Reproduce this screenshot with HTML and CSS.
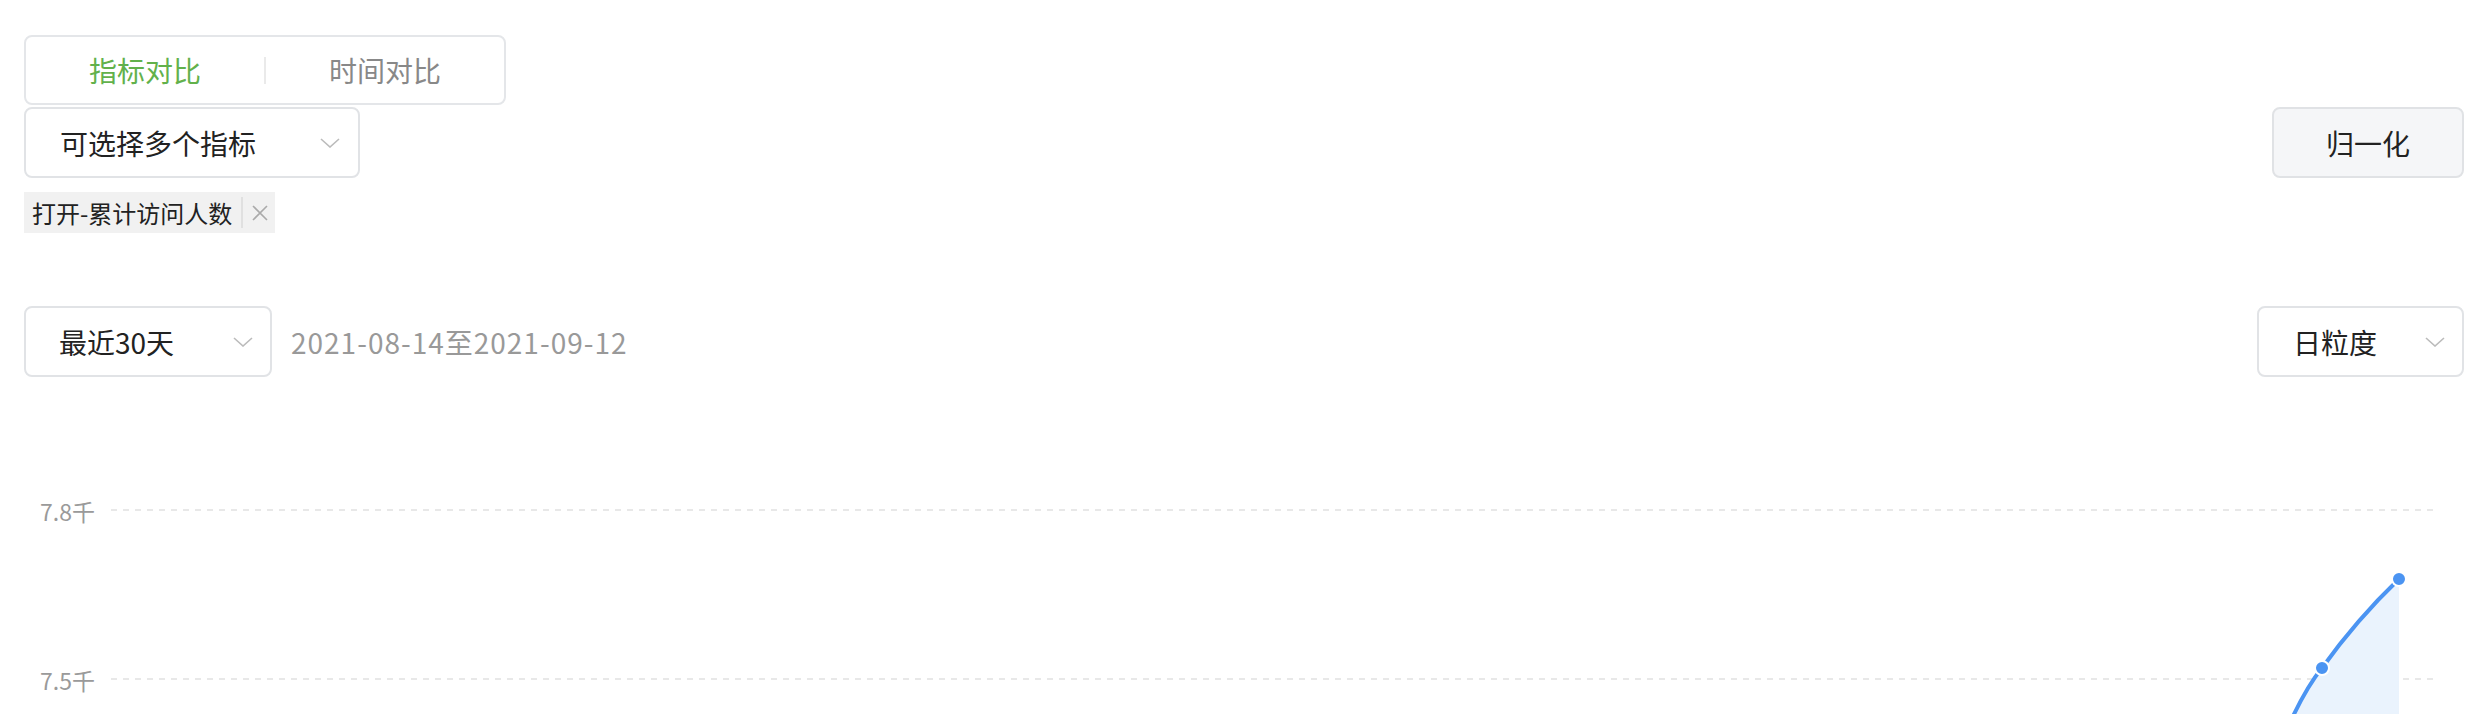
FILE: index.html
```html
<!DOCTYPE html>
<html lang="zh-CN">
<head>
  <meta charset="UTF-8">
  <title>指标对比</title>
  <link rel="stylesheet" href="styles.css">
</head>
<body>
  <div class="page">
    <div class="tabs">
      <div class="tab active">指标对比</div>
      <div class="tab-divider"></div>
      <div class="tab">时间对比</div>
    </div>

    <div class="toolbar">
      <div class="select metric-select">
        <span>可选择多个指标</span>
        <svg class="arrow" width="20" height="10" viewBox="0 0 20 10"><polyline points="1,1 10,9 19,1" fill="none" stroke="#bbb" stroke-width="1.6"/></svg>
      </div>
      <button class="btn">归一化</button>
    </div>

    <div class="tag">
      <span class="tag-text">打开-累计访问人数</span>
      <span class="tag-sep"></span>
      <svg class="tag-close" width="16" height="16" viewBox="0 0 16 16"><path d="M1 1 L15 15 M15 1 L1 15" stroke="#aaa" stroke-width="1.6"/></svg>
    </div>

    <div class="range-row">
      <div class="range-left">
        <div class="select range-select">
          <span>最近30天</span>
          <svg class="arrow" width="20" height="10" viewBox="0 0 20 10"><polyline points="1,1 10,9 19,1" fill="none" stroke="#bbb" stroke-width="1.6"/></svg>
        </div>
        <span class="date-text">2021-08-14至2021-09-12</span>
      </div>
      <div class="select grain-select">
        <span>日粒度</span>
        <svg class="arrow" width="20" height="10" viewBox="0 0 20 10"><polyline points="1,1 10,9 19,1" fill="none" stroke="#bbb" stroke-width="1.6"/></svg>
      </div>
    </div>

    <svg class="chart" width="2440" height="274" viewBox="0 0 2440 274">
      <line x1="87" y1="69" x2="2409" y2="69" stroke="#e8e8e8" stroke-width="2" stroke-dasharray="6 6"/>
      <line x1="87" y1="238" x2="2409" y2="238" stroke="#e8e8e8" stroke-width="2" stroke-dasharray="6 6"/>
      <text class="axis-label" x="71" y="70" text-anchor="end" dominant-baseline="central">7.8千</text>
      <text class="axis-label" x="71" y="239" text-anchor="end" dominant-baseline="central">7.5千</text>
      <path d="M2221 410 C2245 320 2275 255 2298 227 C2323 192 2350 162 2375 138 L2375 420 L2221 420 Z" fill="#eaf3fd"/>
      <path d="M2221 410 C2245 320 2275 255 2298 227 C2323 192 2350 162 2375 138" fill="none" stroke="#4b94f2" stroke-width="4"/>
      <circle cx="2298" cy="227" r="7" fill="#4b94f2" stroke="#fff" stroke-width="2"/>
      <circle cx="2375" cy="138" r="7" fill="#4b94f2" stroke="#fff" stroke-width="2"/>
    </svg>
  </div>
</body>
</html>
```

FILE: styles.css
```css
body {
  margin: 0;
  font-family: "Noto Sans CJK SC", "Noto Sans", sans-serif;
  color: #222;
  background: #fff;
  overflow: hidden;
}

.page {
  padding: 35px 16px 0 24px;
}

.tabs {
  box-sizing: border-box;
  width: 482px;
  height: 70px;
  border: 2px solid #e4e6e9;
  border-radius: 8px;
  display: flex;
  align-items: center;
}

.tab {
  flex: 1;
  text-align: center;
  font-size: 28px;
  line-height: 30px;
  color: #888;
}

.tab.active {
  color: #62b14b;
}

.tab-divider {
  width: 2px;
  height: 27px;
  background: #eaeaea;
}

.toolbar {
  margin-top: 2px;
  display: flex;
  justify-content: space-between;
  align-items: center;
}

.select {
  box-sizing: border-box;
  height: 71px;
  border: 2px solid #e1e3e6;
  border-radius: 8px;
  display: flex;
  align-items: center;
  justify-content: space-between;
  font-size: 28px;
  line-height: 30px;
  color: #222;
}

.metric-select {
  width: 336px;
  padding: 0 18px 0 34px;
}

.range-select {
  width: 248px;
  padding: 0 17px 0 33px;
}

.grain-select {
  width: 207px;
  padding: 0 17px 0 34px;
}

.arrow {
  display: block;
}

.btn {
  box-sizing: border-box;
  width: 192px;
  height: 71px;
  background: #f5f6f8;
  border: 2px solid #e0e2e5;
  border-radius: 8px;
  font-family: inherit;
  font-size: 28px;
  color: #222;
  cursor: pointer;
}

.tag {
  margin-top: 14px;
  box-sizing: border-box;
  height: 41px;
  padding: 0 7px 0 8px;
  background: #f1f1f1;
  display: inline-flex;
  align-items: center;
  white-space: nowrap;
}

.tag-text {
  font-size: 24px;
  line-height: 26px;
  color: #222;
}

.tag-sep {
  width: 2px;
  height: 31px;
  background: #e0e0e0;
  margin: 0 9px 0 9px;
}

.tag-close {
  display: block;
}

.range-row {
  margin-top: 73px;
  display: flex;
  justify-content: space-between;
  align-items: center;
}

.range-left {
  display: flex;
  align-items: center;
}

.date-text {
  margin-left: 19px;
  font-size: 28px;
  color: #999;
  letter-spacing: 1px;
}

.chart {
  display: block;
  margin-top: 64px;
  overflow: visible;
}

.axis-label {
  font-size: 23px;
  fill: #9a9a9a;
  font-family: "Noto Sans CJK SC", "Noto Sans", sans-serif;
}
```
